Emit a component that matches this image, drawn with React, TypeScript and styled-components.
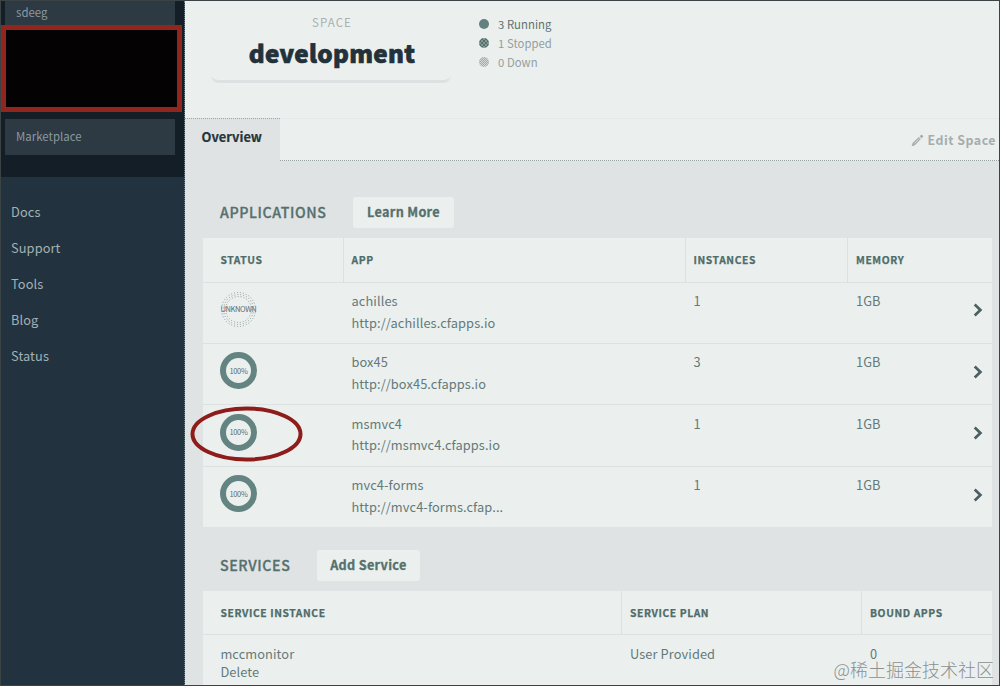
import React from "react";
import styled, { createGlobalStyle } from "styled-components";

const font = `"Noto Sans CJK SC", "Noto Sans", sans-serif`;

const GlobalStyle = createGlobalStyle`
  * { box-sizing: border-box; }
  body { margin: 0; overflow: hidden; font-family: ${font}; }
`;

const Page = styled.div`
  display: flex;
  width: 1000px;
  height: 686px;
  overflow: hidden;
  position: relative;
  border: 1px solid #3c4345;
  background: #dfe3e3;
  color: #5f7878;
  font-size: 13px;
`;

const Sidebar = styled.aside`
  width: 184px;
  flex: none;
  background: #22333f;
  border-right: 1px dotted #6d7d84;
`;

const Orgs = styled.div`
  height: 176px;
  background: #131e27;
  padding: 0 9px 0 4px;
  display: flex;
  flex-direction: column;
`;

const OrgItem = styled.div<{ $h: number; $lift?: number }>`
  height: ${(p) => p.$h}px;
  flex: none;
  padding: 0 0 ${(p) => p.$lift ?? 0}px 11px;
  display: flex;
  align-items: center;
  background: #2d3a44;
  color: #8b999f;
  font-size: 11.4px;
  letter-spacing: 0.05px;
  line-height: 16px;
`;

const Redacted = styled.div`
  height: 87px;
  flex: none;
  margin: 0 -7px 7px -4px;
  background: #040203;
  border: 5px solid #93251f;
`;

const SideNav = styled.nav`
  display: flex;
  flex-direction: column;
  padding: 17px 10px;
`;

const SideLink = styled.a`
  height: 36px;
  line-height: 36px;
  font-size: 12.8px;
  letter-spacing: 0.1px;
  color: #a3b1b5;
`;

const Main = styled.main`
  flex: 1;
  min-width: 0;
`;

const Header = styled.header`
  display: flex;
  height: 117px;
  background: #ebf0ef;
`;

const SpaceCard = styled.div`
  width: 240px;
  height: 82px;
  margin-left: 26px;
  text-align: center;
  border-bottom: 3px solid #dde1e1;
  border-radius: 8px;
`;

const SpaceLabel = styled.div`
  padding: 12px 0 0 2px;
  font-size: 11.5px;
  line-height: 18px;
  letter-spacing: 1.1px;
  color: #a9b1b1;
`;

const SpaceName = styled.div`
  margin-top: 5px;
  padding-left: 2px;
  font-size: 24.2px;
  line-height: 34px;
  font-weight: 900;
  letter-spacing: 0.3px;
  color: #22313a;
  -webkit-text-stroke: 0.7px #22313a;
`;

const Counts = styled.ul`
  list-style: none;
  margin: 14px 0 0 28px;
  padding: 0;
`;

const Count = styled.li<{ $strong?: boolean }>`
  display: flex;
  align-items: center;
  gap: 9px;
  height: 18.8px;
  font-size: 11.3px;
  line-height: 18px;
  letter-spacing: 0.05px;
  color: ${(p) => (p.$strong ? "#5f7070" : "#949e9e")};
`;

const Dot = styled.i<{ $kind: "running" | "stopped" | "down" }>`
  width: 10px;
  height: 10px;
  border-radius: 50%;
  background: ${(p) =>
    p.$kind === "running"
      ? "#638181"
      : p.$kind === "stopped"
      ? "repeating-conic-gradient(#56706c 0 25%, #839893 0 50%) 0 0 / 4px 4px"
      : "repeating-conic-gradient(#a3adab 0 25%, #d0d7d5 0 50%) 0 0 / 2px 2px"};
`;

const Tabs = styled.div`
  display: flex;
  height: 43px;
`;

const Tab = styled.div`
  width: 95px;
  padding-left: 16.5px;
  border-top: 1px dotted #9ca4a4;
  font-size: 12.9px;
  line-height: 36px;
  font-weight: 700;
  color: #26353a;
  -webkit-text-stroke: 0.2px #26353a;
`;

const TabFill = styled.div`
  flex: 1;
  display: flex;
  justify-content: flex-end;
  align-items: center;
  gap: 4px;
  padding: 1px 3px 0 0;
  background: #ebf0ef;
  border-top: 1px solid #e4e9e8;
  border-bottom: 1px dotted #969f9f;
  font-size: 12.4px;
  letter-spacing: 0.5px;
  font-weight: 700;
  line-height: 20px;
  color: #a5adad;
  white-space: nowrap;
`;

const Content = styled.div`
  padding: 36px 7px 0 18px;
`;

const Section = styled.section`
  margin-bottom: 23px;
`;

const SectionHead = styled.div`
  display: flex;
  align-items: center;
  gap: 26.5px;
  height: 31px;
  margin: 0 0 10px 17px;
`;

const Title = styled.h2`
  margin: 0;
  padding-bottom: 1px;
  font-size: 14.2px;
  line-height: 20px;
  font-weight: 500;
  letter-spacing: 0.6px;
  color: #56706f;
  -webkit-text-stroke: 0.3px #56706f;
`;

const Button = styled.button<{ $w: number }>`
  width: ${(p) => p.$w}px;
  height: 31px;
  padding: 0 0 1px;
  border: 0;
  border-radius: 3px;
  background: #ebf0ef;
  font: 700 12.7px/20px ${font};
  letter-spacing: 0.3px;
  color: #55716e;
  -webkit-text-stroke: 0.3px #55716e;
  white-space: nowrap;
`;

const Table = styled.div`
  background: #ebf0ef;
`;

const Row = styled.div<{ $cols: string; $h: number; $last?: boolean }>`
  display: grid;
  grid-template-columns: ${(p) => p.$cols};
  height: ${(p) => p.$h}px;
  border-bottom: 1px solid ${(p) => (p.$last ? "#ebf0ef" : "#dce1e1")};
`;

const HeadCell = styled.div`
  padding: 0 0 0 8px;
  border-left: 1px solid #dce1e1;
  font-size: 10.3px;
  line-height: 43px;
  font-weight: 700;
  letter-spacing: 0.6px;
  color: #4f6c69;
  -webkit-text-stroke: 0.25px #4f6c69;
  white-space: nowrap;

  &:first-child {
    border-left: 0;
    padding-left: 17.5px;
  }
`;

const Cell = styled.div<{ $line?: number; $top?: number }>`
  padding: ${(p) => p.$top ?? 7.4}px 0 0 9px;
  font-size: 12.8px;
  line-height: ${(p) => p.$line ?? 21.8}px;
  letter-spacing: 0.1px;
  white-space: nowrap;
  color: #637a79;

  &:first-child {
    padding-left: 17.4px;
  }
`;

const Ring = styled.div<{ $unknown?: boolean }>`
  width: 37px;
  height: 37px;
  margin: 1px 0 0 -0.4px;
  border-radius: 50%;
  border: ${(p) => (p.$unknown ? "0" : "6px solid #648481")};
  display: flex;
  align-items: center;
  justify-content: center;
  position: relative;
  font-size: 7.5px;
  line-height: 10px;
  letter-spacing: -0.4px;
  color: #5a6c70;

  svg {
    position: absolute;
    inset: 0;
  }
`;

const LastCell = styled(Cell)`
  display: flex;
  justify-content: space-between;
  padding-right: 9.5px;

  svg {
    margin-top: 13.5px;
  }
`;

const Mark = styled.svg`
  position: absolute;
  left: 188px;
  top: 404px;
`;

const Watermark = styled.div`
  position: absolute;
  right: 5px;
  bottom: 4px;
  font-size: 18px;
  line-height: 24px;
  font-weight: 300;
  color: #8b9090;
  white-space: nowrap;
`;

const APP_COLS = "139.5px 342px 162.5px 1fr";
const SERVICE_COLS = "418px 240px 1fr";

const apps = [
  { name: "achilles", url: "http://achilles.cfapps.io", n: 1, status: "UNKNOWN" },
  { name: "box45", url: "http://box45.cfapps.io", n: 3, status: "100%" },
  { name: "msmvc4", url: "http://msmvc4.cfapps.io", n: 1, status: "100%" },
  { name: "mvc4-forms", url: "http://mvc4-forms.cfap...", n: 1, status: "100%" },
];

const Chevron = () => (
  <svg width="10" height="14" viewBox="0 0 10 14" fill="none" stroke="#4b6161" strokeWidth="2.7">
    <path d="M1.7 1.6 7.4 7 1.7 12.4" />
  </svg>
);

const Pencil = () => (
  <svg width="13" height="13" viewBox="0 0 13 13" fill="#a5adad">
    <path d="M.6 12.2 1.6 9 7.8 3.1 9.9 5.1 3.9 11.2ZM8.6 2.3 9.9 1.1q.7-.6 1.3 0l.7.7q.6.7 0 1.3L10.7 4.3Z" />
    <path d="M3.4 9.5 8.3 4.6" stroke="#ebf0ef" strokeWidth=".7" />
  </svg>
);

export default function App() {
  return (
    <Page>
      <GlobalStyle />
      <Sidebar>
        <Orgs>
          <OrgItem $h={24} $lift={2}>sdeeg</OrgItem>
          <Redacted />
          <OrgItem $h={36} $lift={2}>Marketplace</OrgItem>
        </Orgs>
        <SideNav>
          {["Docs", "Support", "Tools", "Blog", "Status"].map((t) => (
            <SideLink key={t}>{t}</SideLink>
          ))}
        </SideNav>
      </Sidebar>
      <Main>
        <Header>
          <SpaceCard>
            <SpaceLabel>SPACE</SpaceLabel>
            <SpaceName>development</SpaceName>
          </SpaceCard>
          <Counts>
            <Count $strong><Dot $kind="running" />3 Running</Count>
            <Count><Dot $kind="stopped" />1 Stopped</Count>
            <Count><Dot $kind="down" />0 Down</Count>
          </Counts>
        </Header>
        <Tabs>
          <Tab>Overview</Tab>
          <TabFill><Pencil />Edit Space</TabFill>
        </Tabs>
        <Content>
          <Section>
            <SectionHead>
              <Title>APPLICATIONS</Title>
              <Button $w={101}>Learn More</Button>
            </SectionHead>
            <Table>
              <Row $cols={APP_COLS} $h={44.5}>
                <HeadCell>STATUS</HeadCell>
                <HeadCell>APP</HeadCell>
                <HeadCell>INSTANCES</HeadCell>
                <HeadCell>MEMORY</HeadCell>
              </Row>
              {apps.map((a, i) => (
                <Row
                  key={a.name}
                  $cols={APP_COLS}
                  $h={i === apps.length - 1 ? 60.5 : 61.4}
                  $last={i === apps.length - 1}
                >
                  <Cell>
                    <Ring $unknown={a.status === "UNKNOWN"}>
                      {a.status === "UNKNOWN" && (
                        <svg width="37" height="37" fill="none" stroke="#8b9b9b">
                          <circle cx="18.5" cy="18.5" r="17" strokeDasharray="1 2" />
                          <circle cx="18.5" cy="18.5" r="15" strokeDasharray="1 2" />
                          <circle cx="18.5" cy="18.5" r="13" strokeDasharray="1 2" />
                        </svg>
                      )}
                      {a.status}
                    </Ring>
                  </Cell>
                  <Cell>
                    <div>{a.name}</div>
                    <div>{a.url}</div>
                  </Cell>
                  <Cell>{a.n}</Cell>
                  <LastCell>1GB<Chevron /></LastCell>
                </Row>
              ))}
            </Table>
          </Section>
          <Section>
            <SectionHead>
              <Title>SERVICES</Title>
              <Button $w={103}>Add Service</Button>
            </SectionHead>
            <Table>
              <Row $cols={SERVICE_COLS} $h={44}>
                <HeadCell>SERVICE INSTANCE</HeadCell>
                <HeadCell>SERVICE PLAN</HeadCell>
                <HeadCell>BOUND APPS</HeadCell>
              </Row>
              <Row $cols={SERVICE_COLS} $h={62} $last>
                <Cell $line={18} $top={10}>
                  <div>mccmonitor</div>
                  <div>Delete</div>
                </Cell>
                <Cell $line={18} $top={10}>User Provided</Cell>
                <Cell $line={18} $top={10}>0</Cell>
              </Row>
            </Table>
          </Section>
        </Content>
      </Main>
      <Mark width="114" height="58" viewBox="0 0 114 58" fill="none" stroke="#8e1c1b" strokeWidth="4">
        <ellipse cx="57.5" cy="29" rx="54" ry="25.5" />
      </Mark>
      <Watermark>@稀土掘金技术社区</Watermark>
    </Page>
  );
}
